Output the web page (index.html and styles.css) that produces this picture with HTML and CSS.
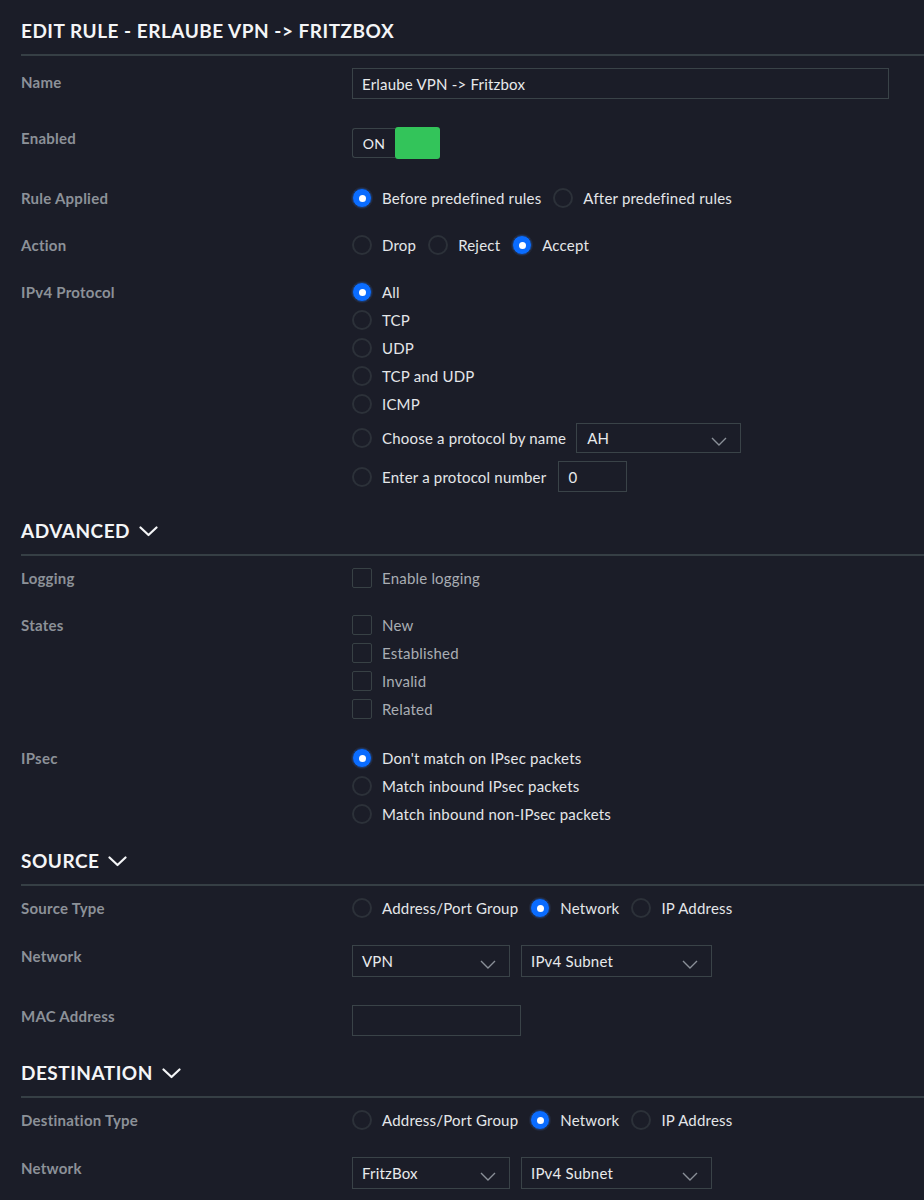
FILE: index.html
```html
<!DOCTYPE html>
<html>
<head>
<meta charset="utf-8">
<link rel="stylesheet" href="styles.css">
</head>
<body>
<div class="page">
  <h2 class="heading first">EDIT RULE - ERLAUBE VPN -&gt; FRITZBOX</h2>

  <div class="row ctl">
    <div class="label">Name</div>
    <div class="field"><div class="input name-input">Erlaube VPN -&gt; Fritzbox</div></div>
  </div>

  <div class="row ctl">
    <div class="label">Enabled</div>
    <div class="field">
      <div class="toggle"><span class="toggle-text">ON</span><span class="toggle-knob"></span></div>
    </div>
  </div>

  <div class="row">
    <div class="label">Rule Applied</div>
    <div class="field">
      <div class="line">
        <span class="opt"><span class="radio on"></span>Before predefined rules</span>
        <span class="opt"><span class="radio"></span>After predefined rules</span>
      </div>
    </div>
  </div>

  <div class="row">
    <div class="label">Action</div>
    <div class="field">
      <div class="line">
        <span class="opt"><span class="radio"></span>Drop</span>
        <span class="opt"><span class="radio"></span>Reject</span>
        <span class="opt"><span class="radio on"></span>Accept</span>
      </div>
    </div>
  </div>

  <div class="row ctl">
    <div class="label">IPv4 Protocol</div>
    <div class="field">
      <div class="line"><span class="opt"><span class="radio on"></span>All</span></div>
      <div class="line"><span class="opt"><span class="radio"></span>TCP</span></div>
      <div class="line"><span class="opt"><span class="radio"></span>UDP</span></div>
      <div class="line"><span class="opt"><span class="radio"></span>TCP and UDP</span></div>
      <div class="line"><span class="opt"><span class="radio"></span>ICMP</span></div>
      <div class="line with-select">
        <span class="opt"><span class="radio"></span>Choose a protocol by name</span>
        <div class="select proto-select"><span>AH</span><svg class="chev" width="16" height="9" viewBox="0 0 16 9"><polyline points="1,1 8,8 15,1"/></svg></div>
      </div>
      <div class="line with-input">
        <span class="opt"><span class="radio"></span>Enter a protocol number</span>
        <div class="input num-input">0</div>
      </div>
    </div>
  </div>

  <h2 class="heading">ADVANCED <svg class="head-chev" width="19" height="11" viewBox="0 0 19 11"><polyline points="1.5,1.5 9.5,9 17.5,1.5"/></svg></h2>

  <div class="row">
    <div class="label">Logging</div>
    <div class="field">
      <div class="line"><span class="opt dim"><span class="check"></span>Enable logging</span></div>
    </div>
  </div>

  <div class="row">
    <div class="label">States</div>
    <div class="field">
      <div class="line"><span class="opt dim"><span class="check"></span>New</span></div>
      <div class="line"><span class="opt dim"><span class="check"></span>Established</span></div>
      <div class="line"><span class="opt dim"><span class="check"></span>Invalid</span></div>
      <div class="line"><span class="opt dim"><span class="check"></span>Related</span></div>
    </div>
  </div>

  <div class="row spaced">
    <div class="label">IPsec</div>
    <div class="field">
      <div class="line"><span class="opt"><span class="radio on"></span>Don't match on IPsec packets</span></div>
      <div class="line"><span class="opt"><span class="radio"></span>Match inbound IPsec packets</span></div>
      <div class="line"><span class="opt"><span class="radio"></span>Match inbound non-IPsec packets</span></div>
    </div>
  </div>

  <h2 class="heading">SOURCE <svg class="head-chev" width="19" height="11" viewBox="0 0 19 11"><polyline points="1.5,1.5 9.5,9 17.5,1.5"/></svg></h2>

  <div class="row">
    <div class="label">Source Type</div>
    <div class="field">
      <div class="line">
        <span class="opt"><span class="radio"></span>Address/Port Group</span>
        <span class="opt"><span class="radio on"></span>Network</span>
        <span class="opt"><span class="radio"></span>IP Address</span>
      </div>
    </div>
  </div>

  <div class="row ctl after-type">
    <div class="label">Network</div>
    <div class="field">
      <div class="selects">
        <div class="select net-select"><span>VPN</span><svg class="chev" width="16" height="9" viewBox="0 0 16 9"><polyline points="1,1 8,8 15,1"/></svg></div>
        <div class="select type-select"><span>IPv4 Subnet</span><svg class="chev" width="16" height="9" viewBox="0 0 16 9"><polyline points="1,1 8,8 15,1"/></svg></div>
      </div>
    </div>
  </div>

  <div class="row ctl">
    <div class="label">MAC Address</div>
    <div class="field"><div class="input mac-input"></div></div>
  </div>

  <h2 class="heading tight">DESTINATION <svg class="head-chev" width="19" height="11" viewBox="0 0 19 11"><polyline points="1.5,1.5 9.5,9 17.5,1.5"/></svg></h2>

  <div class="row">
    <div class="label">Destination Type</div>
    <div class="field">
      <div class="line">
        <span class="opt"><span class="radio"></span>Address/Port Group</span>
        <span class="opt"><span class="radio on"></span>Network</span>
        <span class="opt"><span class="radio"></span>IP Address</span>
      </div>
    </div>
  </div>

  <div class="row ctl after-type">
    <div class="label">Network</div>
    <div class="field">
      <div class="selects">
        <div class="select net-select"><span>FritzBox</span><svg class="chev" width="16" height="9" viewBox="0 0 16 9"><polyline points="1,1 8,8 15,1"/></svg></div>
        <div class="select type-select"><span>IPv4 Subnet</span><svg class="chev" width="16" height="9" viewBox="0 0 16 9"><polyline points="1,1 8,8 15,1"/></svg></div>
      </div>
    </div>
  </div>
</div>
</body>
</html>
```

FILE: styles.css
```css
html, body {
  margin: 0;
  background: #1b1d28;
}

body {
  font-family: Lato, "Open Sans", "Liberation Sans", sans-serif;
  font-size: 15px;
  letter-spacing: 0.2px;
  color: #e4e6e9;
}

.page {
  padding: 19px 0 0 21px;
}

.heading {
  display: flex;
  align-items: center;
  gap: 9px;
  margin: 21px 0 0;
  padding-bottom: 11px;
  border-bottom: 2px solid #363f45;
  font-size: 19px;
  font-weight: 700;
  line-height: 24px;
  letter-spacing: 0.5px;
  color: #f4f5f7;
}

.heading.first {
  margin-top: 0;
}

.heading.tight {
  margin-top: 19px;
}

.head-chev polyline {
  fill: none;
  stroke: #f4f5f7;
  stroke-width: 2.2;
  stroke-linecap: round;
  stroke-linejoin: round;
}

.row {
  display: flex;
  align-items: flex-start;
  margin-top: 19px;
}

.row.spaced {
  margin-top: 21px;
}

.row.after-type {
  margin-top: 20px;
}

.heading + .row {
  margin-top: 8px;
}

.heading.first + .row {
  margin-top: 12px;
}

.row.ctl {
  padding-bottom: 6px;
}

.label {
  width: 331px;
  flex: none;
  line-height: 28px;
  font-weight: 700;
  letter-spacing: 0.25px;
  color: #8c9198;
}

.field {
  display: flex;
  flex-direction: column;
}

.line {
  display: flex;
  align-items: center;
  height: 28px;
  line-height: 28px;
}

.line.with-select {
  height: 30px;
  margin-top: 5px;
}

.line.with-input {
  height: 31px;
  margin-top: 8px;
}

.opt {
  display: inline-flex;
  align-items: center;
  margin-right: 12px;
  white-space: nowrap;
}

.opt.dim {
  color: #a9adb3;
}

.radio {
  position: relative;
  width: 20px;
  height: 20px;
  box-sizing: border-box;
  border-radius: 50%;
  border: 2px solid #2c3139;
  margin-right: 10px;
  flex: none;
}

.radio.on {
  background: #0a6cff;
  border: 1px solid #1d3560;
  box-shadow: 0 0 0 1px #22283a;
}

.radio.on::after {
  content: "";
  position: absolute;
  left: 50%;
  top: 50%;
  width: 7px;
  height: 7px;
  margin: -3.5px 0 0 -3.5px;
  border-radius: 50%;
  background: #ffffff;
}

.check {
  width: 20px;
  height: 20px;
  box-sizing: border-box;
  border: 1.5px solid #384145;
  border-radius: 2px;
  margin-right: 10px;
  flex: none;
}

.input {
  box-sizing: border-box;
  border: 1px solid #3a4348;
  padding: 0 9px;
  display: flex;
  align-items: center;
  color: #e8eaec;
}

.name-input {
  width: 537px;
  height: 31px;
}

.num-input {
  width: 69px;
  height: 31px;
}

.mac-input {
  width: 169px;
  height: 31px;
  margin-top: 3px;
}

.toggle {
  display: flex;
  width: 88px;
  height: 32px;
  margin-top: 3px;
}

.toggle-text {
  box-sizing: border-box;
  width: 43px;
  height: 30px;
  margin-top: 1px;
  border: 1px solid #3a4348;
  border-right: none;
  border-radius: 3px 0 0 3px;
  display: flex;
  align-items: center;
  justify-content: center;
  font-size: 14px;
  color: #eceef0;
}

.toggle-knob {
  width: 45px;
  height: 32px;
  background: #33c45a;
  border-radius: 3px;
}

.select {
  box-sizing: border-box;
  border: 1px solid #3a4348;
  display: flex;
  align-items: center;
  justify-content: space-between;
  padding: 0 13px 0 9px;
  color: #e8eaec;
}

.chev polyline {
  fill: none;
  stroke: #8a9098;
  stroke-width: 1.4;
}

.chev {
  margin-top: 6px;
}

.proto-select {
  width: 165px;
  height: 30px;
  padding-left: 10px;
  margin-left: -2px;
}

.selects {
  display: flex;
  gap: 11px;
  margin-top: 3px;
}

.net-select {
  width: 158px;
  height: 32px;
}

.type-select {
  width: 191px;
  height: 32px;
}
```
